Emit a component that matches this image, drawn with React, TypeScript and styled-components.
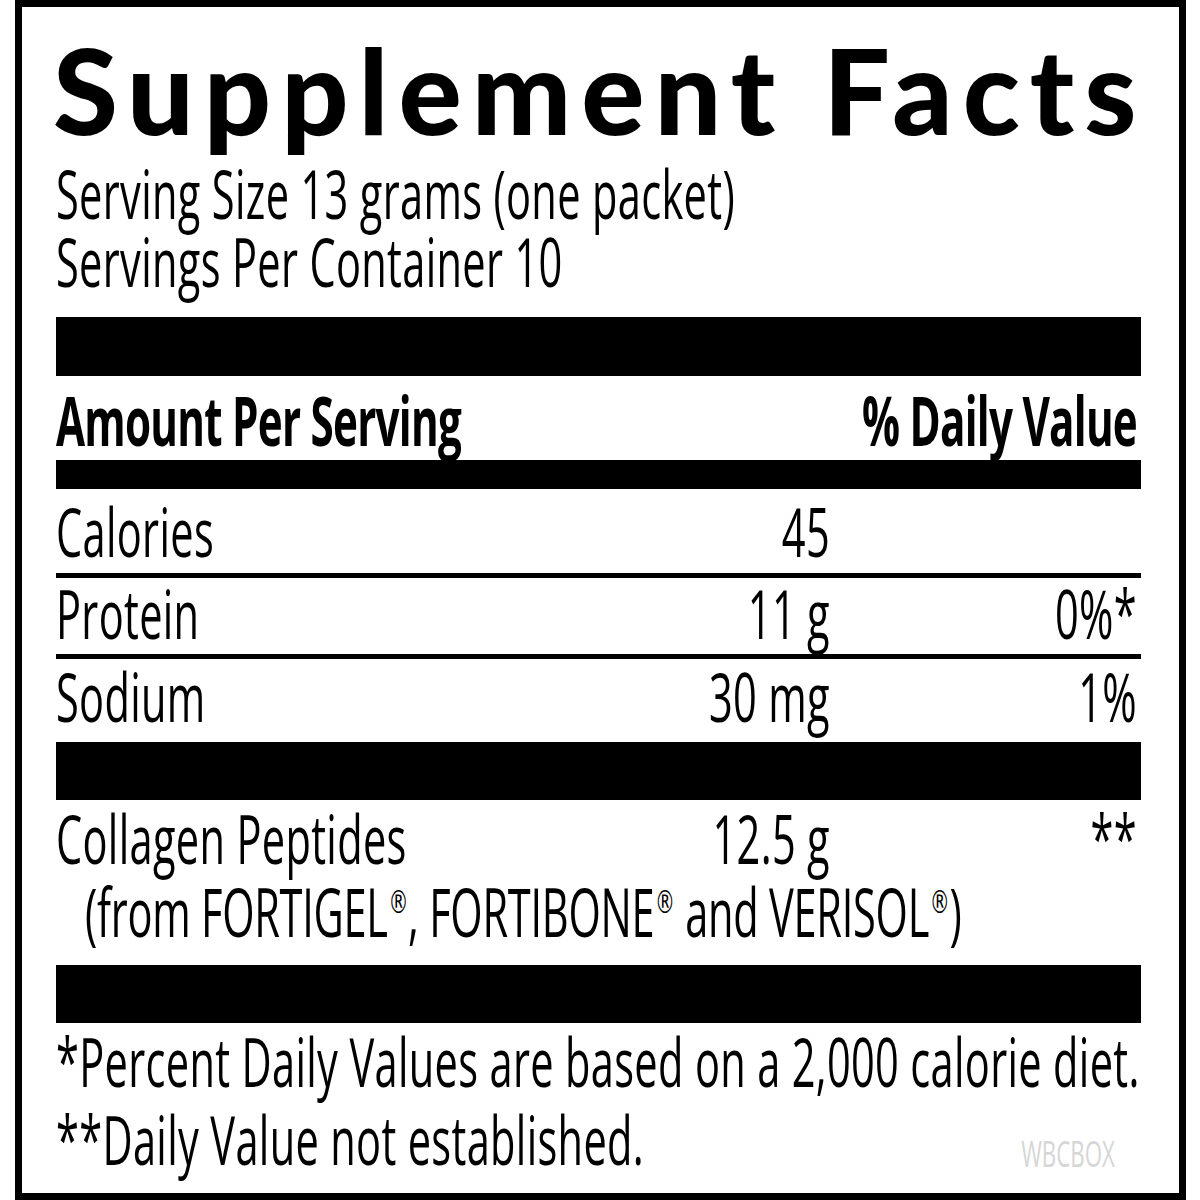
import React from "react";
import styled, { createGlobalStyle } from "styled-components";

const S = 0.62; // horizontal condensing of the label body
const d = (px: number) => px / S; // page px -> condensed design px

const Global = createGlobalStyle`
  html, body { margin: 0; padding: 0; background: #fff; overflow: hidden; }
  #root { width: 1200px; height: 1200px; }
`;

const Label = styled.div`
  box-sizing: border-box;
  width: 1171px;
  height: 1200px;
  margin-left: 15px;
  border: 7px solid #000;
  background: #fff;
  color: #000;
  overflow: hidden;
  padding-left: 34px;
`;

const Title = styled.h1`
  margin: 24px 0 0 -3px;
  font-family: "Lato", "Inter", sans-serif;
  font-weight: 900;
  font-size: 118px;
  line-height: 117px;
  white-space: nowrap;
  letter-spacing: 10px;
`;

const Body = styled.div`
  width: ${d(1085)}px;
  transform: scaleX(${S});
  transform-origin: 0 0;
  font-family: "Open Sans", "Noto Sans", sans-serif;
  font-weight: 500;
  font-size: 67px;
  letter-spacing: 0.55px;
  white-space: nowrap;
`;

const ServingLine = styled.div<{ $mt?: number }>`
  height: 68px;
  line-height: 68px;
  margin-top: ${(p) => p.$mt ?? 0}px;
`;

const Bar = styled.div<{ $h: number; $mt?: number }>`
  height: ${(p) => p.$h}px;
  margin-top: ${(p) => p.$mt ?? 0}px;
  background: #000;
`;

const Row = styled.div<{ $h: number; $pt: number; $rule?: boolean }>`
  box-sizing: border-box;
  display: grid;
  grid-template-columns: 1fr ${d(260)}px ${d(307)}px;
  padding-right: ${d(4)}px;
  height: ${(p) => p.$h}px;
  padding-top: ${(p) => p.$pt}px;
  line-height: 52px;
  border-bottom: ${(p) => (p.$rule ? "5px solid #000" : "none")};
`;

const HeadRow = styled(Row)`
  font-weight: 700;
  font-size: 68px;
  letter-spacing: -1.2px;
`;

const Cell = styled.span<{ $right?: boolean; $span?: string }>`
  text-align: ${(p) => (p.$right ? "right" : "left")};
  ${(p) => (p.$span ? `grid-column: ${p.$span};` : "")}
`;

const Block = styled.div<{ $h: number; $pt: number }>`
  box-sizing: border-box;
  height: ${(p) => p.$h}px;
  padding-top: ${(p) => p.$pt}px;
  line-height: 52px;
`;

const SubLine = styled.div`
  margin-top: 21px;
  padding-left: ${d(29)}px;
  letter-spacing: -0.4px;
`;

const Sup = styled.sup`
  font-family: "DejaVu Sans", "Liberation Sans", sans-serif;
  font-weight: 400;
  font-size: 0.48em;
  line-height: 0;
  vertical-align: 0.74em;
  margin-left: 1px;
`;

const FootLine = styled.div<{ $mt?: number }>`
  display: flex;
  justify-content: space-between;
  align-items: flex-end;
  line-height: 52px;
  margin-top: ${(p) => p.$mt ?? 0}px;
`;

const Code = styled.span`
  font-size: 36px;
  line-height: 22px;
  letter-spacing: 0;
  color: #d6d6d6;
  margin-right: ${d(26)}px;
`;

const R = "\u00AE\uFE0E";

export default function App() {
  return (
    <>
      <Global />
      <Label>
        <Title>Supplement Facts</Title>
        <Body>
          <ServingLine $mt={11}>Serving Size 13 grams (one packet)</ServingLine>
          <ServingLine>Servings Per Container 10</ServingLine>
          <Bar $h={59} $mt={22} />
          <HeadRow $h={84} $pt={18}>
            <Cell>Amount Per Serving</Cell>
            <Cell $right $span="2 / 4">% Daily Value</Cell>
          </HeadRow>
          <Bar $h={29} />
          <Row $h={89} $pt={16} $rule>
            <Cell>Calories</Cell>
            <Cell $right>45</Cell>
            <Cell $right />
          </Row>
          <Row $h={81} $pt={9} $rule>
            <Cell>Protein</Cell>
            <Cell $right>11 g</Cell>
            <Cell $right>0%*</Cell>
          </Row>
          <Row $h={83} $pt={11}>
            <Cell>Sodium</Cell>
            <Cell $right>30 mg</Cell>
            <Cell $right>1%</Cell>
          </Row>
          <Bar $h={58} />
          <Block $h={165} $pt={12}>
            <Row $h={52} $pt={0}>
              <Cell>Collagen Peptides</Cell>
              <Cell $right>12.5 g</Cell>
              <Cell $right>**</Cell>
            </Row>
            <SubLine>
              (from FORTIGEL<Sup>{R}</Sup>, FORTIBONE<Sup>{R}</Sup> and VERISOL<Sup>{R}</Sup>)
            </SubLine>
          </Block>
          <Bar $h={58} />
          <Block $h={170} $pt={12}>
            <FootLine>*Percent Daily Values are based on a 2,000 calorie diet.</FootLine>
            <FootLine $mt={26}>
              <span>**Daily Value not established.</span>
              <Code>WBCBOX</Code>
            </FootLine>
          </Block>
        </Body>
      </Label>
    </>
  );
}
